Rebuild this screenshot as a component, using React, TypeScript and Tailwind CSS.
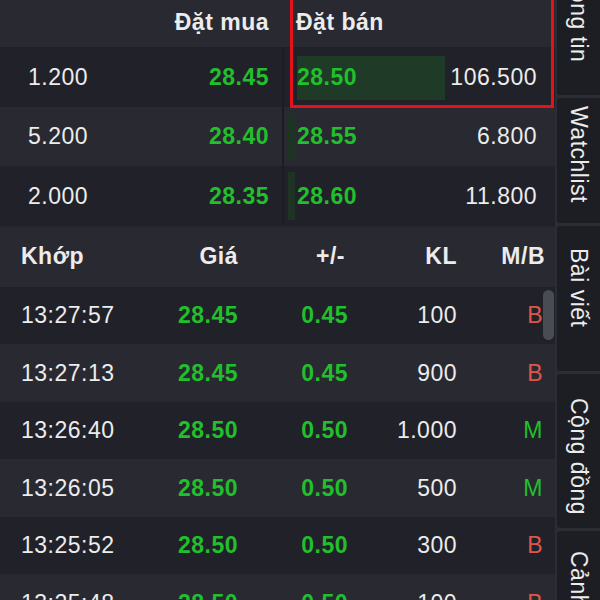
const book = [
	{ bidVol: "1.200", bid: "28.45", ask: "28.50", askVol: "106.500", bar: 148 },
	{ bidVol: "5.200", bid: "28.40", ask: "28.55", askVol: "6.800", bar: 0 },
	{ bidVol: "2.000", bid: "28.35", ask: "28.60", askVol: "11.800", bar: 0 },
];

const trades = [
	{ time: "13:27:57", price: "28.45", chg: "0.45", vol: "100", side: "B" },
	{ time: "13:27:13", price: "28.45", chg: "0.45", vol: "900", side: "B" },
	{ time: "13:26:40", price: "28.50", chg: "0.50", vol: "1.000", side: "M" },
	{ time: "13:26:05", price: "28.50", chg: "0.50", vol: "500", side: "M" },
	{ time: "13:25:52", price: "28.50", chg: "0.50", vol: "300", side: "B" },
	{ time: "13:25:48", price: "28.50", chg: "0.50", vol: "100", side: "B" },
];

const tabs = [
	{ label: "Thông tin", cls: "h-[155px] pt-[22px] mt-[-60px]" },
	{ label: "Watchlist", cls: "h-[125px] pt-[8px]" },
	{ label: "Bài viết", cls: "h-[145px] pt-[22px]" },
	{ label: "Cộng đồng", cls: "h-[154px] pt-[24px]" },
	{ label: "Cảnh báo", cls: "h-[120px] pt-[20px]" },
];

const cols = "grid grid-cols-[150px_88px_110px_109px_88px] shrink-0 items-center";

export default function App() {
	return (
		<div
			className="w-[600px] h-[600px] overflow-hidden flex bg-[#25262d] text-[#ececec] text-[23px] tracking-[0.5px]"
			style={{ fontFamily: '"Liberation Sans", Arial, sans-serif' }}
		>
			<div className="relative w-[555px] shrink-0 flex flex-col">
				{/* order book */}
				<div className="flex shrink-0 h-[47px] bg-[#292a31] font-bold">
					<div className="w-[282px] pr-[13px] pt-[5px] text-right">Đặt mua</div>
					<div className="pl-[14px] pt-[5px]">Đặt bán</div>
				</div>
				{book.map((r, i) => (
					<div
						key={r.bid}
						className={
							"flex shrink-0 h-[59.5px] items-center " +
							(i % 2 === 0 ? "bg-[#212229]" : "bg-[#292a31]")
						}
					>
						<div className="w-[282px] h-full flex items-center justify-between pl-[28px] pr-[13px]">
							<span>{r.bidVol}</span>
							<span className="font-bold text-[#22bf2c]">{r.bid}</span>
						</div>
						<div className="w-[2px] h-full bg-[#1c1d23]" />
						<div className="relative flex-1 h-full flex items-center justify-between pl-[13px] pr-[18px]">
							{r.bar > 0 ? (
								<div className="absolute left-[13px] top-[9px] bottom-[7px] w-[148px] bg-[#1f3a26]" />
							) : (
								<div className="absolute left-[4px] top-[6px] bottom-[6px] w-[7px] bg-[#1f3325]" />
							)}
							<span className="relative font-bold text-[#22bf2c]">{r.ask}</span>
							<span className="relative">{r.askVol}</span>
						</div>
					</div>
				))}
				<div className="absolute left-[290px] top-[-5px] w-[264px] h-[113px] border-[3px] border-[#e5121c]" />

				{/* trades */}
				<div className={cols + " h-[60px] bg-[#292a31] font-bold mt-[1px]"}>
					<div className="pl-[21px]">Khớp</div>
					<div className="text-right">Giá</div>
					<div className="text-right pr-[3px]">+/-</div>
					<div className="text-right">KL</div>
					<div className="text-right">M/B</div>
				</div>
				{trades.map((t, i) => (
					<div
						key={t.time}
						className={cols + " h-[57.5px] " + (i % 2 === 0 ? "bg-[#212229]" : "bg-[#292a31]")}
					>
						<div className="pl-[21px]">{t.time}</div>
						<div className="text-right font-bold text-[#22bf2c]">{t.price}</div>
						<div className="text-right font-bold text-[#22bf2c]">{t.chg}</div>
						<div className="text-right">{t.vol}</div>
						<div
							className={
								"text-right pr-[2px] " +
								(t.side === "B" ? "text-[#e0554a]" : "text-[#22bf2c]")
							}
						>
							{t.side}
						</div>
					</div>
				))}
				<div className="absolute left-[543px] top-[290px] w-[11px] h-[50px] rounded-full bg-[#4a4c54]" />
			</div>

			{/* side tabs */}
			<div className="w-[45px] shrink-0 flex flex-col gap-[3px] bg-[#2c2d34] pl-[2px] text-[23px] tracking-[0.5px]">
				{tabs.map((t) => (
					<div
						key={t.label}
						className={"shrink-0 rounded-l-[3px] bg-[#1d1e24] flex justify-center " + t.cls}
					>
						<span className="[writing-mode:vertical-rl] whitespace-nowrap">{t.label}</span>
					</div>
				))}
			</div>
		</div>
	);
}
